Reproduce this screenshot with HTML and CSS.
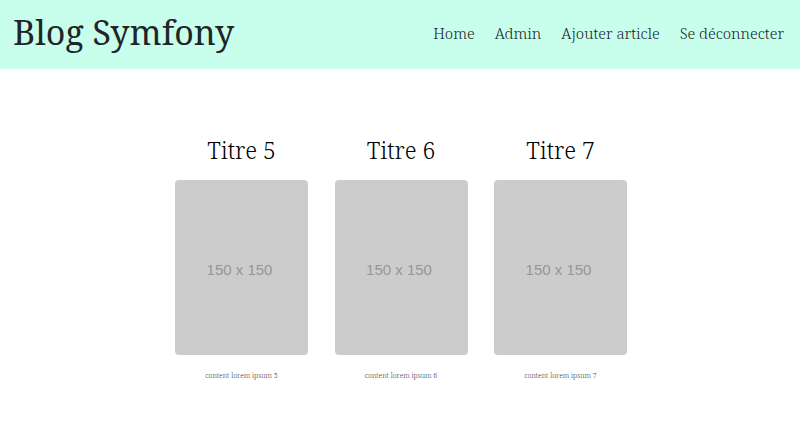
FILE: index.html
```html
<!DOCTYPE html>
<html lang="fr">
<head>
<meta charset="utf-8">
<title>Blog Symfony</title>
<link rel="stylesheet" href="styles.css">
</head>
<body>
<header class="header">
  <a class="brand" href="#">Blog Symfony</a>
  <nav class="nav">
    <a href="#">Home</a>
    <a href="#">Admin</a>
    <a href="#">Ajouter article</a>
    <a href="#">Se déconnecter</a>
  </nav>
</header>
<main class="articles">
  <article class="article">
    <h2 class="title">Titre 5</h2>
    <div class="thumb">150 x 150</div>
    <p class="content">content lorem ipsum 5</p>
  </article>
  <article class="article">
    <h2 class="title">Titre 6</h2>
    <div class="thumb">150 x 150</div>
    <p class="content">content lorem ipsum 6</p>
  </article>
  <article class="article">
    <h2 class="title">Titre 7</h2>
    <div class="thumb">150 x 150</div>
    <p class="content">content lorem ipsum 7</p>
  </article>
</main>
</body>
</html>
```
FILE: styles.css
```css
* { box-sizing: border-box; }
body {
  margin: 0;
  background: #fff;
  color: #212529;
  font-family: "Roboto Slab", "Noto Serif", "Liberation Serif", serif;
  font-weight: 300;
}
.header {
  display: flex;
  align-items: center;
  justify-content: space-between;
  padding: 10px 16px 14px 13px;
  background: #c8ffec;
}
.brand {
  color: #212529;
  font-size: 34px;
  font-weight: 400;
  line-height: 45px;
  text-decoration: none;
}
.nav { display: flex; gap: 20px; }
.nav a {
  color: #212529;
  font-size: 15px;
  line-height: 24px;
  text-decoration: none;
}
.articles {
  display: grid;
  grid-template-columns: repeat(3, 133px);
  justify-content: space-between;
  max-width: 454px;
  margin: 0 auto;
  padding: 65px 0 40px 2px;
}
.article { text-align: center; }
.title {
  margin: 0 0 14px;
  color: #000;
  font-size: 23px;
  font-weight: 300;
  line-height: 32px;
}
.thumb {
  display: flex;
  align-items: center;
  justify-content: center;
  height: 175px;
  padding: 4px 4px 0 0;
  border-radius: 4px;
  background: #ccc;
  color: #969696;
  font-family: "Liberation Sans", sans-serif;
  font-size: 15px;
  font-weight: 400;
}
.content {
  margin: 16px 0 0;
  color: #444;
  font-size: 7px;
  line-height: 10px;
}
```
